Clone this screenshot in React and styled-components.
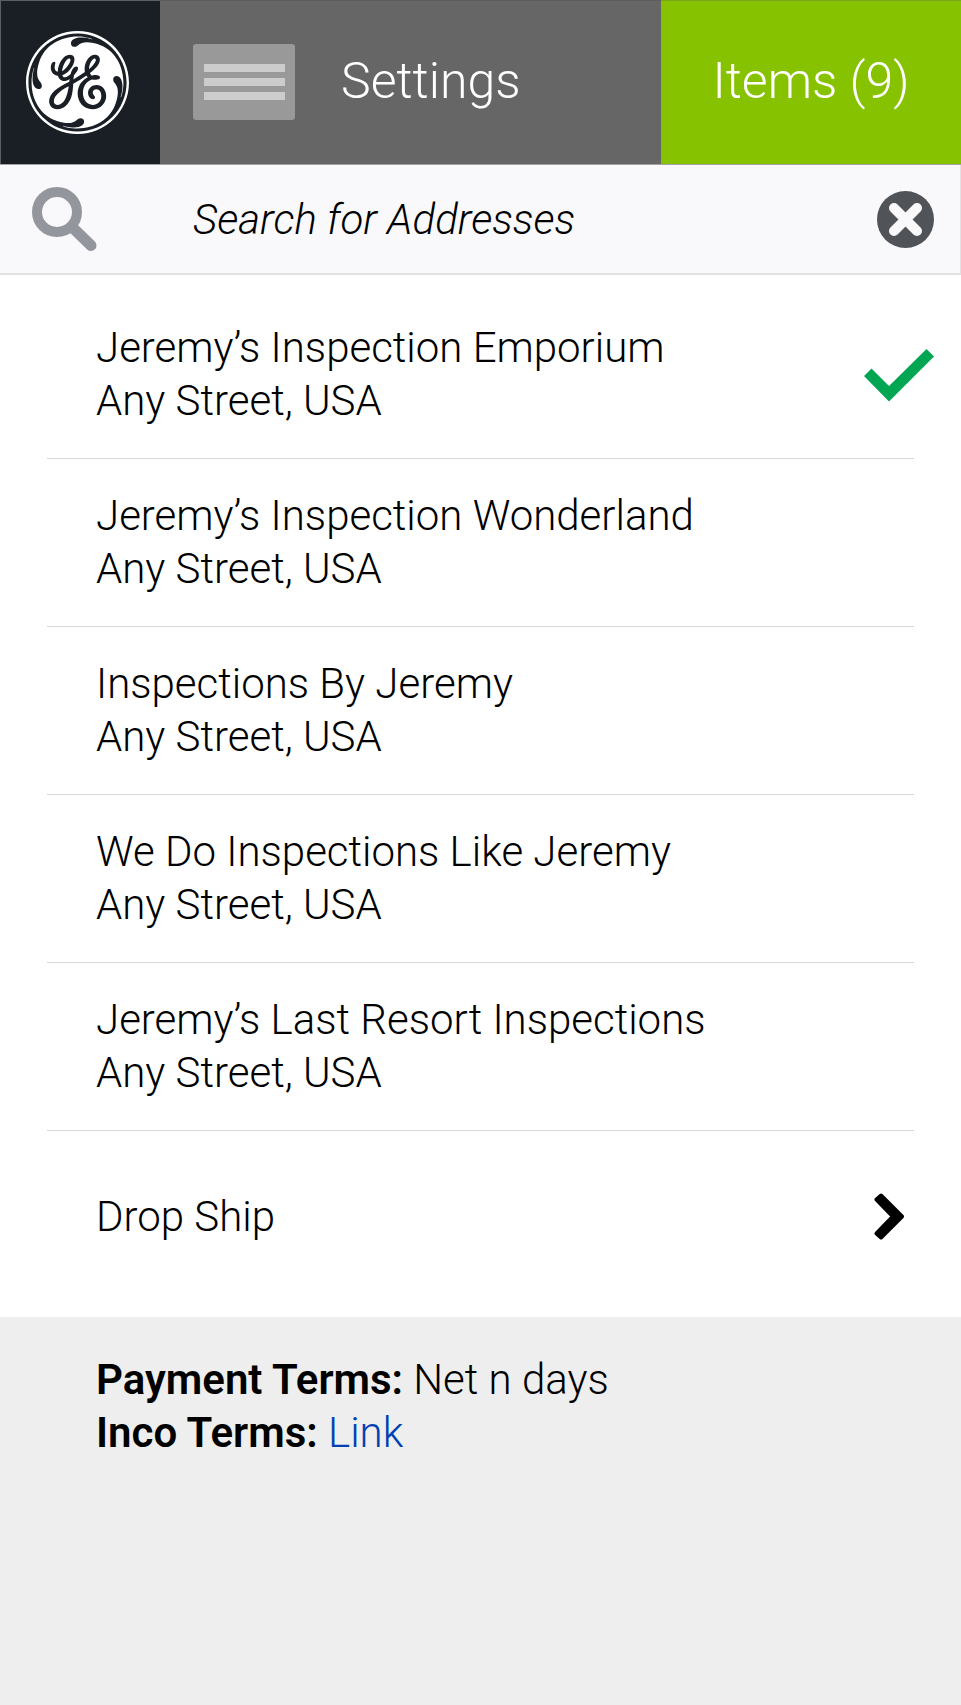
import React from "react";
import styled, { createGlobalStyle } from "styled-components";
import { SiGeneralelectric } from "react-icons/si";

const GlobalStyle = createGlobalStyle`
  *, *::before, *::after { box-sizing: border-box; }
  body { margin: 0; background: #eee; }
  button, input { font: inherit; color: inherit; border: 0; padding: 0; background: none; }
  button { cursor: pointer; }
`;

const Page = styled.div`
  display: flex;
  flex-direction: column;
  min-height: 100vh;
  font-family: Roboto, "Liberation Sans", sans-serif;
  font-weight: 300;
  font-size: 42px;
  line-height: 53px;
  color: #000;
`;

const Header = styled.header`
  display: grid;
  grid-template-columns: 160px 1fr 300px;
  height: 165px;
  border-bottom: 1px solid #a3a3a3;
  color: #fff;
  font-size: 50px;
`;

const LogoLink = styled.a`
  display: flex;
  align-items: center;
  justify-content: center;
  padding-right: 6px;
  background: #1a1f25;
  border: solid #5b5f63;
  border-width: 1px 0 0 1px;
  color: #fff;
`;

const Nav = styled.nav`
  display: flex;
  align-items: center;
  gap: 46px;
  padding: 0 0 2px 33px;
  background: #666;
  border-top: 1px solid #5c5c5c;
`;

const MenuButton = styled.button`
  width: 102px;
  height: 76px;
  border-radius: 3px;
  background: #999;
  display: flex;
  flex-direction: column;
  align-items: center;
  justify-content: center;
  gap: 6px;
`;

const MenuBar = styled.span`
  width: 81px;
  height: 8px;
  background: #ccc;
`;

const Title = styled.h1`
  margin: 0;
  font-size: inherit;
  font-weight: inherit;
`;

const ItemsButton = styled.button`
  padding-bottom: 2px;
  background: #87c200;
  border-top: 1px solid #7aa518;
`;

const SearchBar = styled.form`
  display: flex;
  align-items: center;
  height: 110px;
  padding: 0 26px 0 32px;
  background: #f9f9fc;
  border: solid #e2e2e4;
  border-width: 0 1px 2px 0;
`;

const SearchInput = styled.input`
  flex: 1;
  min-width: 0;
  height: 60px;
  margin-left: 96px;
  font-style: italic;
  outline: none;
  &::placeholder { color: #000; opacity: 1; }
`;

const IconButton = styled.button`
  display: flex;
`;

const Icon = styled.svg`
  display: block;
  flex: none;
`;

const List = styled.ul`
  margin: 0;
  padding: 16px 47px 0;
  list-style: none;
  background: #fff;
`;

const Item = styled.li`
  border-bottom: 1px solid #d8d8d8;
`;

const AddressButton = styled.button`
  display: flex;
  align-items: center;
  justify-content: space-between;
  width: 100%;
  height: 167px;
  padding: 0 0 2px 49px;
  text-align: left;
`;

const Name = styled.span`
  display: block;
`;

const CheckIcon = styled(Icon)`
  margin: 4px -20px 0 0;
`;

const DropShip = styled.button`
  display: flex;
  align-items: center;
  justify-content: space-between;
  width: 100%;
  height: 186px;
  padding: 0 56px 16px 96px;
  background: #fff;
  text-align: left;
`;

const Terms = styled.footer`
  flex: 1;
  padding: 36px 96px;
  background: #eee;
`;

const Term = styled.p`
  margin: 0;
`;

const Label = styled.strong`
  font-weight: 600;
`;

const TermLink = styled.a`
  color: #0041b3;
  text-decoration: none;
`;

const addresses = [
  { name: "Jeremy’s Inspection Emporium", selected: true },
  { name: "Jeremy’s Inspection Wonderland" },
  { name: "Inspections By Jeremy" },
  { name: "We Do Inspections Like Jeremy" },
  { name: "Jeremy’s Last Resort Inspections" },
];

export default function App() {
  return (
    <Page>
      <GlobalStyle />
      <Header>
        <LogoLink href="#" aria-label="GE home">
          <SiGeneralelectric size={103} />
        </LogoLink>
        <Nav>
          <MenuButton type="button" aria-label="Menu">
            <MenuBar />
            <MenuBar />
            <MenuBar />
          </MenuButton>
          <Title>Settings</Title>
        </Nav>
        <ItemsButton type="button">Items (9)</ItemsButton>
      </Header>

      <SearchBar role="search">
        <Icon width="65" height="65" viewBox="0 0 65 65" fill="none" stroke="#93969c" aria-hidden="true">
          <circle cx="25" cy="25" r="20" strokeWidth="10" />
          <path d="M41 41 L59 58.500" strokeWidth="11" strokeLinecap="round" />
        </Icon>
        <SearchInput type="text" aria-label="Search for Addresses" placeholder="Search for Addresses" />
        <IconButton type="reset" aria-label="Clear search">
          <Icon width="57" height="57" viewBox="0 0 57 57" aria-hidden="true">
            <circle cx="28.500" cy="28.500" r="28.500" fill="#505459" />
            <path d="M17 17 L40 40 M40 17 L17 40" stroke="#f9f9fc" strokeWidth="10" strokeLinecap="round" />
          </Icon>
        </IconButton>
      </SearchBar>

      <main>
        <List>
          {addresses.map(({ name, selected }) => (
            <Item key={name}>
              <AddressButton type="button" aria-pressed={Boolean(selected)}>
                <span>
                  <Name>{name}</Name>
                  <Name>Any Street, USA</Name>
                </span>
                {selected && (
                  <CheckIcon width="70" height="53" viewBox="0 0 70 53" fill="#00a651" aria-hidden="true">
                    <path d="M0 27 L7.500 19.500 L25 37 L62.500 0 L70 7.500 L25 52.500 Z" />
                  </CheckIcon>
                )}
              </AddressButton>
            </Item>
          ))}
        </List>
        <DropShip type="button">
          Drop Ship
          <Icon width="31" height="47" viewBox="0 0 31 47" stroke="#000" strokeWidth="4" strokeLinejoin="round" aria-hidden="true">
            <path d="M7 2.500 L28 23.500 L7 44.500 L2.500 40.500 L19 23.500 L2.500 6.500 Z" />
          </Icon>
        </DropShip>
      </main>

      <Terms>
        <Term>
          <Label>Payment Terms:</Label> Net n days
        </Term>
        <Term>
          <Label>Inco Terms:</Label> <TermLink href="#inco-terms">Link</TermLink>
        </Term>
      </Terms>
    </Page>
  );
}
